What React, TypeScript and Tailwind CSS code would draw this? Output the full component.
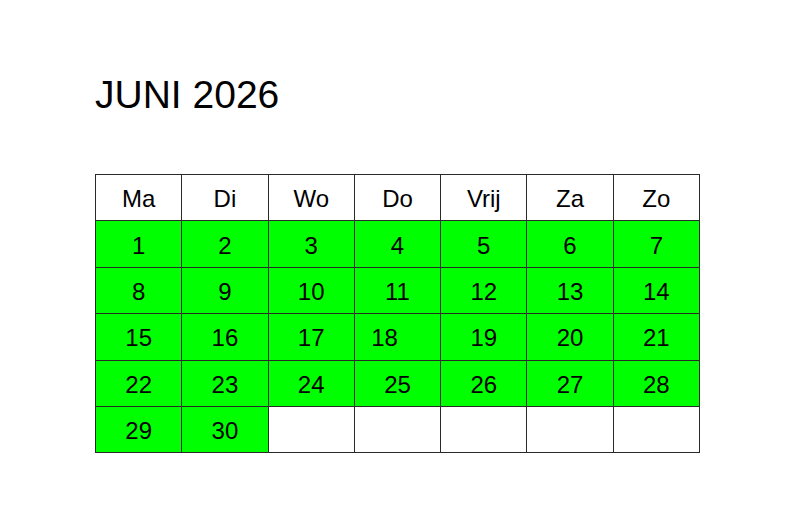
import React from "react";

const days = ["Ma", "Di", "Wo", "Do", "Vrij", "Za", "Zo"];

// juni 2026 begint op maandag
const weeks: (number | null)[][] = [
  [1, 2, 3, 4, 5, 6, 7],
  [8, 9, 10, 11, 12, 13, 14],
  [15, 16, 17, 18, 19, 20, 21],
  [22, 23, 24, 25, 26, 27, 28],
  [29, 30, null, null, null, null, null],
];

const App = () => {
  return (
    <div className="w-[799px] h-[527px] bg-white pl-[95px] pt-[72px] font-['Liberation_Sans',Arial,sans-serif] text-black">
      <div className="text-[39px] leading-[45px]">JUNI 2026</div>

      <table className="mt-[57px] border-collapse table-fixed w-[605px]">
        <thead>
          <tr>
            {days.map((d) => (
              <th
                key={d}
                className="border border-[#2a2a2a] h-[46.4px] p-0 pt-[2px] text-[24px] font-normal text-center align-middle"
              >
                {d}
              </th>
            ))}
          </tr>
        </thead>
        <tbody>
          {weeks.map((week, wi) => (
            <tr key={wi}>
              {week.map((n, di) => (
                <td
                  key={di}
                  className={
                    "border border-[#2a2a2a] h-[46.4px] p-0 pt-[3px] text-[24px] text-center align-middle " +
                    (n === null ? "bg-white" : "bg-[#00ff00]") +
                    (n === 18 ? " pr-[26px]" : "")
                  }
                >
                  {n}
                </td>
              ))}
            </tr>
          ))}
        </tbody>
      </table>
    </div>
  );
};

export default App;
